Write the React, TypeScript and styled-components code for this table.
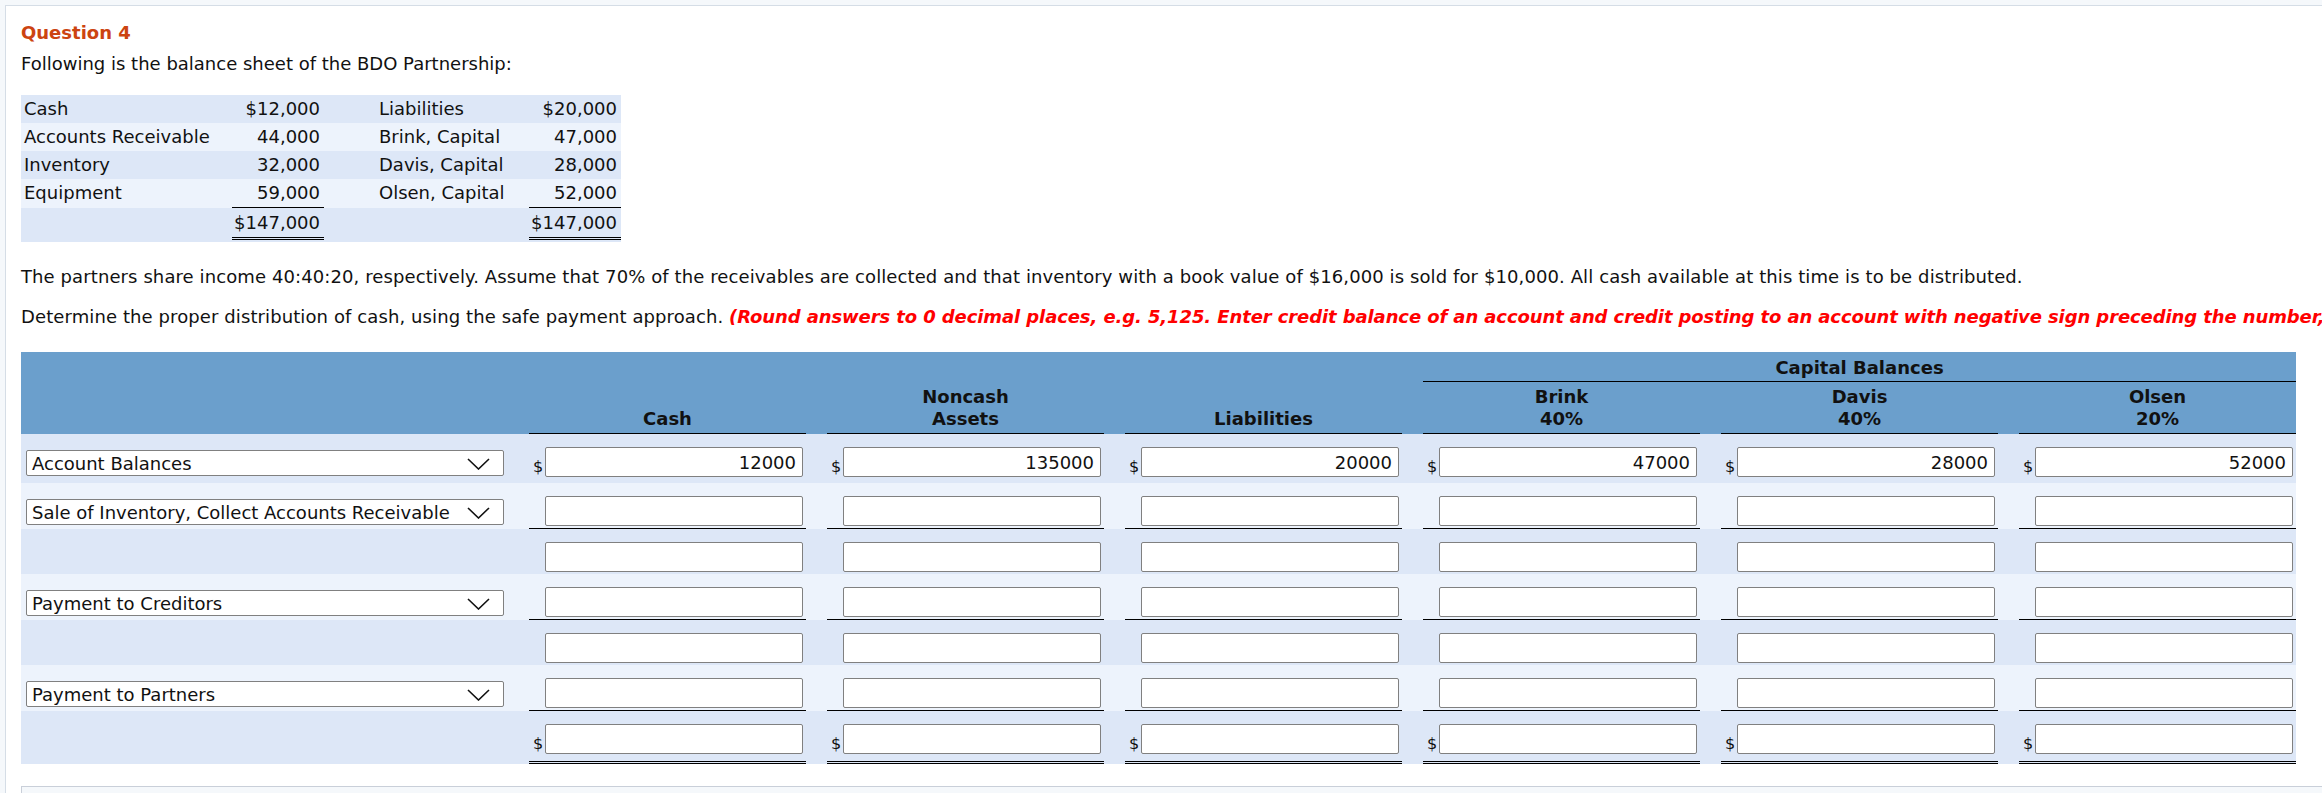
import React from "react";
import styled, { createGlobalStyle, css } from "styled-components";

const GlobalStyle = createGlobalStyle`
  html, body {
    margin: 0;
    padding: 0;
    background: #f5f8fb;
    overflow: hidden;
  }
  body {
    font-family: "DejaVu Sans", Verdana, sans-serif;
    font-size: 18px;
    line-height: 22px;
    color: #111;
  }
`;

const Page = styled.div`
  padding: 5px 0 0 5px;
`;

const Panel = styled.div`
  background: #fff;
  border: 1px solid #d5dde6;
  border-right: none;
  padding: 16px 0 0 15px;
  width: 3000px;
  min-height: 900px;
`;

const QuestionTitle = styled.h2`
  margin: 0;
  font-size: 18px;
  line-height: 22px;
  font-weight: bold;
  color: #cc4411;
`;

const Intro = styled.p`
  margin: 9px 0 0;
`;

const Sheet = styled.div`
  margin-top: 20px;
  width: 600px;
`;

type Shade = "dark" | "light";
type Rule = "none" | "single" | "double";

const shadeColor = (s: Shade) => (s === "dark" ? "#dde7f7" : "#edf3fc");

const SheetRow = styled.div<{ $shade: Shade; $total?: boolean }>`
  display: grid;
  grid-template-columns: 211px 92px 205px 92px;
  align-items: start;
  background: ${(p) => shadeColor(p.$shade)};
  padding-bottom: ${(p) => (p.$total ? 2 : 0)}px;
`;

const SheetLabel = styled.div<{ $indent?: boolean }>`
  height: 28px;
  line-height: 28px;
  padding-left: ${(p) => (p.$indent ? 55 : 3)}px;
  white-space: nowrap;
`;

const SheetAmount = styled.div<{ $rule: Rule }>`
  height: 28px;
  line-height: 28px;
  text-align: right;
  padding-right: 4px;
  ${(p) =>
    p.$rule === "single" &&
    css`
      border-bottom: 1px solid #000;
    `}
  ${(p) =>
    p.$rule === "double" &&
    css`
      height: 29px;
      line-height: 29px;
      border-bottom: 3px double #000;
    `}
`;

const Para = styled.p<{ $gap: number }>`
  margin: ${(p) => p.$gap}px 0 0;
  white-space: nowrap;
  letter-spacing: 0.1px;
`;

const Hint = styled.span`
  color: #ff0000;
  font-weight: bold;
  font-style: italic;
  letter-spacing: -0.1px;
`;

const gridCols = css`
  display: grid;
  grid-template-columns: 487px repeat(6, 277px);
  column-gap: 21px;
  width: 2275px;
`;

const Worksheet = styled.div`
  margin-top: 24px;
  width: 2275px;
`;

const HeaderBand = styled.div`
  ${gridCols};
  background: #6b9fcc;
  font-weight: bold;
  color: #111;
`;

const GroupHeading = styled.div`
  grid-column: 5 / 8;
  grid-row: 1;
  text-align: center;
  padding: 5px 0 2px;
  border-bottom: 1px solid #000;
`;

const HeadSpacer = styled.div`
  grid-row: 2;
`;

const ColHeading = styled.div`
  grid-row: 2;
  display: flex;
  flex-direction: column;
  justify-content: flex-end;
  text-align: center;
  padding: 4px 0 3px;
  border-bottom: 1px solid #000;
`;

const DataRow = styled.div<{ $shade: Shade }>`
  ${gridCols};
  background: ${(p) => shadeColor(p.$shade)};
`;

const LabelCell = styled.div<{ $pb: number; $rule: Rule }>`
  display: flex;
  align-items: flex-end;
  padding: 13px 0 ${(p) => p.$pb + (p.$rule === "single" ? 1 : p.$rule === "double" ? 3 : 0)}px 5px;
`;

const AmountCell = styled.div<{ $pb: number; $rule: Rule }>`
  display: flex;
  align-items: flex-end;
  padding: 13px 0 ${(p) => p.$pb}px;
  ${(p) =>
    p.$rule === "single" &&
    css`
      border-bottom: 1px solid #000;
    `}
  ${(p) =>
    p.$rule === "double" &&
    css`
      border-bottom: 3px double #000;
    `}
`;

const Dollar = styled.span`
  flex: 0 0 12px;
  padding-left: 4px;
  font-size: 16px;
  line-height: 16px;
  margin-bottom: 2px;
`;

const Field = styled.input`
  box-sizing: border-box;
  width: 258px;
  height: 30px;
  margin: 0;
  border: 1px solid #808080;
  border-radius: 2px;
  padding: 0 6px;
  background: #fff;
  font-family: "DejaVu Sans", Verdana, sans-serif;
  font-size: 18px;
  color: #111;
  text-align: right;
  outline: none;
`;

const SelectBox = styled.div`
  box-sizing: border-box;
  width: 478px;
  height: 26px;
  margin-bottom: 1px;
  border: 1px solid #808080;
  border-radius: 2px;
  background: #fff;
  display: flex;
  align-items: center;
  justify-content: space-between;
  padding: 2px 13px 0 5px;
  white-space: nowrap;
  line-height: 22px;
`;

const Chevron = () => (
  <svg width="23" height="12" viewBox="0 0 23 12" aria-hidden="true">
    <polyline points="1,1 11.5,11 22,1" fill="none" stroke="#111" strokeWidth="1.6" />
  </svg>
);

const BottomBox = styled.div`
  margin-top: 22px;
  width: 2400px;
  height: 60px;
  border: 1px solid #c9cfd9;
  background: #f5f8fb;
`;

const sheetRows: { a: string; b: string; c: string; d: string; shade: Shade; rule: Rule; total?: boolean }[] = [
  { a: "Cash", b: "$12,000", c: "Liabilities", d: "$20,000", shade: "dark", rule: "none" },
  { a: "Accounts Receivable", b: "44,000", c: "Brink, Capital", d: "47,000", shade: "light", rule: "none" },
  { a: "Inventory", b: "32,000", c: "Davis, Capital", d: "28,000", shade: "dark", rule: "none" },
  { a: "Equipment", b: "59,000", c: "Olsen, Capital", d: "52,000", shade: "light", rule: "single" },
  { a: "", b: "$147,000", c: "", d: "$147,000", shade: "dark", rule: "double", total: true },
];

const headings: string[][] = [
  ["Cash"],
  ["Noncash", "Assets"],
  ["Liabilities"],
  ["Brink", "40%"],
  ["Davis", "40%"],
  ["Olsen", "20%"],
];

type WorkRow = {
  label?: string;
  values?: string[];
  dollar?: boolean;
  shade: Shade;
  rule: Rule;
  pb: number;
};

const workRows: WorkRow[] = [
  {
    label: "Account Balances",
    values: ["12000", "135000", "20000", "47000", "28000", "52000"],
    dollar: true,
    shade: "dark",
    rule: "none",
    pb: 6,
  },
  { label: "Sale of Inventory, Collect Accounts Receivable", shade: "light", rule: "single", pb: 2 },
  { shade: "dark", rule: "none", pb: 2 },
  { label: "Payment to Creditors", shade: "light", rule: "single", pb: 2 },
  { shade: "dark", rule: "none", pb: 2 },
  { label: "Payment to Partners", shade: "light", rule: "single", pb: 2 },
  { dollar: true, shade: "dark", rule: "double", pb: 7 },
];

export default function App() {
  return (
    <>
      <GlobalStyle />
      <Page>
        <Panel>
          <QuestionTitle>Question 4</QuestionTitle>
          <Intro>Following is the balance sheet of the BDO Partnership:</Intro>
          <Sheet>
            {sheetRows.map((r, i) => (
              <SheetRow key={i} $shade={r.shade} $total={r.total}>
                <SheetLabel>{r.a}</SheetLabel>
                <SheetAmount $rule={r.rule}>{r.b}</SheetAmount>
                <SheetLabel $indent>{r.c}</SheetLabel>
                <SheetAmount $rule={r.rule}>{r.d}</SheetAmount>
              </SheetRow>
            ))}
          </Sheet>
          <Para $gap={24}>
            The partners share income 40:40:20, respectively. Assume that 70% of the receivables are collected and
            that inventory with a book value of $16,000 is sold for $10,000. All cash available at this time is to be
            distributed.
          </Para>
          <Para $gap={18}>
            Determine the proper distribution of cash, using the safe payment approach.{" "}
            <Hint>
              (Round answers to 0 decimal places, e.g. 5,125. Enter credit balance of an account and credit posting to
              an account with negative sign preceding the number, e.g. -15,000 or parentheses e.g. (15,000).)
            </Hint>
          </Para>
          <Worksheet>
            <HeaderBand>
              <GroupHeading>Capital Balances</GroupHeading>
              <HeadSpacer />
              {headings.map((h, i) => (
                <ColHeading key={i}>
                  {h.map((line) => (
                    <div key={line}>{line}</div>
                  ))}
                </ColHeading>
              ))}
            </HeaderBand>
            {workRows.map((row, ri) => (
              <DataRow key={ri} $shade={row.shade}>
                <LabelCell $pb={row.pb} $rule={row.rule}>
                  {row.label && (
                    <SelectBox role="combobox">
                      <span>{row.label}</span>
                      <Chevron />
                    </SelectBox>
                  )}
                </LabelCell>
                {headings.map((_, ci) => (
                  <AmountCell key={ci} $pb={row.pb} $rule={row.rule}>
                    <Dollar>{row.dollar ? "$" : ""}</Dollar>
                    <Field readOnly defaultValue={row.values ? row.values[ci] : ""} />
                  </AmountCell>
                ))}
              </DataRow>
            ))}
          </Worksheet>
          <BottomBox />
        </Panel>
      </Page>
    </>
  );
}
